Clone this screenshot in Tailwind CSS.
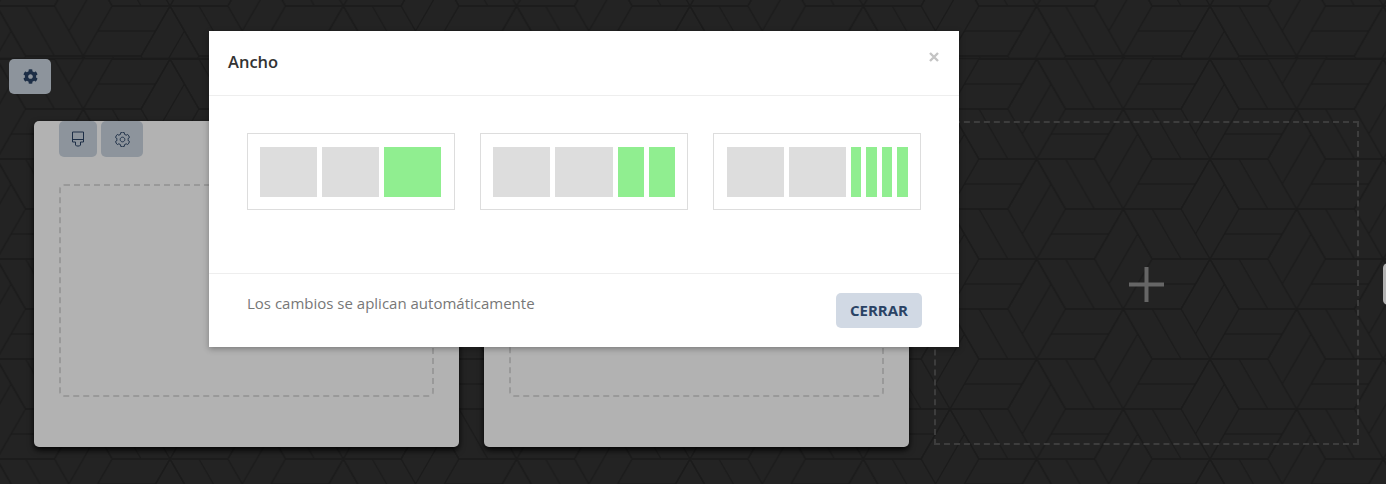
<!DOCTYPE html>
<html lang="es">
<head>
<meta charset="utf-8">
<script src="https://cdn.jsdelivr.net/npm/@tailwindcss/browser@4"></script>
<title>Ancho</title>
</head>
<body class="m-0 overflow-hidden font-['Open_Sans','Noto_Sans',sans-serif]">
<div class="relative h-[484px] w-[1386px] overflow-hidden bg-[#333333]">
  <!-- background texture -->
  <svg class="absolute inset-0 h-full w-full" xmlns="http://www.w3.org/2000/svg" aria-hidden="true">
    <defs>
      <g id="cell" fill="none" stroke="#282828" stroke-width="1.5">
        <path d="M0 0L28.87 -50L0 -100L-28.87 -50ZM14.43 -75L-14.43 -25"/>
        <path d="M0 0L-57.73 0L-86.67 -50L-28.87 -50M-57.73 -50L-28.87 0"/>
        <path d="M0 0L57.73 0L86.67 -50L28.87 -50M14.43 -25L72.2 -25"/>
      </g>
      <g id="tile">
        <use href="#cell" x="0" y="0"/><use href="#cell" x="173.33" y="0"/>
        <use href="#cell" x="0" y="100"/><use href="#cell" x="173.33" y="100"/>
        <use href="#cell" x="0" y="200"/><use href="#cell" x="173.33" y="200"/>
        <use href="#cell" x="86.67" y="50"/><use href="#cell" x="86.67" y="150"/>
        <use href="#cell" x="-86.67" y="50"/><use href="#cell" x="-86.67" y="150"/>
        <use href="#cell" x="260" y="50"/><use href="#cell" x="260" y="150"/>
      </g>
      <pattern id="main" patternUnits="userSpaceOnUse" x="83.33" y="9" width="173.33" height="100"><use href="#tile"/></pattern>
      <pattern id="top" patternUnits="userSpaceOnUse" x="83.33" y="56" width="173.33" height="100"><use href="#tile"/></pattern>
    </defs>
    <rect x="0" y="0" width="1386" height="58" fill="url(#top)"/>
    <rect x="0" y="59" width="1386" height="425" fill="url(#main)"/>
    <rect x="0" y="57.7" width="1386" height="1.6" fill="#282828"/>
  </svg>

  <!-- page content -->
  <div class="relative flex h-full flex-col">
    <div class="pl-[9px] pt-[59px]">
      <button class="flex h-[35px] w-[42px] items-center justify-center rounded-[5px] bg-[#cbd5e0]">
        <svg class="h-[15px] w-[15px]" viewBox="0 0 512 512"><path fill="#2a4365" d="M487.4 315.7l-42.6-24.6c4.3-23.2 4.3-47 0-70.2l42.6-24.6c4.9-2.8 7.1-8.6 5.5-14-11.1-35.6-30-67.8-54.7-94.6-3.8-4.1-10-5.1-14.8-2.3L380.8 110c-17.9-15.4-38.5-27.3-60.8-35.1V25.8c0-5.6-3.9-10.5-9.4-11.7-36.7-8.2-74.3-7.8-109.2 0-5.5 1.2-9.4 6.1-9.4 11.7V75c-22.2 7.9-42.8 19.8-60.8 35.1L88.7 85.5c-4.9-2.8-11-1.9-14.8 2.3-24.7 26.7-43.6 58.9-54.7 94.6-1.7 5.4.6 11.2 5.5 14L67.3 221c-4.3 23.2-4.3 47 0 70.2l-42.6 24.6c-4.9 2.8-7.1 8.6-5.5 14 11.1 35.6 30 67.8 54.7 94.6 3.8 4.1 10 5.1 14.8 2.3l42.6-24.6c17.9 15.4 38.5 27.3 60.8 35.1v49.2c0 5.6 3.9 10.5 9.4 11.7 36.7 8.2 74.3 7.8 109.2 0 5.5-1.2 9.4-6.1 9.4-11.7v-49.2c22.2-7.9 42.8-19.8 60.8-35.1l42.6 24.6c4.9 2.8 11 1.9 14.8-2.3 24.7-26.7 43.6-58.9 54.7-94.6 1.5-5.5-.7-11.3-5.6-14.1zM256 336c-44.1 0-80-35.9-80-80s35.9-80 80-80 80 35.9 80 80-35.9 80-80 80z"/></svg>
      </button>
    </div>
    <div class="mt-[27px] flex gap-[25px] pl-[34px]">
      <div class="h-[326px] w-[425px] rounded-[5px] bg-white px-[25px] shadow-[0_3px_6px_rgba(0,0,0,0.9)]">
        <div class="flex gap-[4px]">
          <button class="flex h-[36px] w-[38px] items-center justify-center rounded-[5px] bg-[#cbd5e0]">
            <svg class="h-[16px] w-[14px]" viewBox="0 0 14 16" fill="none" stroke="#2a4365" stroke-width="1"><path d="M1.5 1H12.5V11H9.5V14L8.5 15H5.5L4.5 14V11H1.5ZM1.5 8.5H12.5"/></svg>
          </button>
          <button class="flex h-[36px] w-[42px] items-center justify-center rounded-[5px] bg-[#cbd5e0]">
            <svg class="h-[15px] w-[15px]" viewBox="0 0 512 512"><path fill="none" stroke="#2a4365" stroke-width="34" d="M487.4 315.7l-42.6-24.6c4.3-23.2 4.3-47 0-70.2l42.6-24.6c4.9-2.8 7.1-8.6 5.5-14-11.1-35.6-30-67.8-54.7-94.6-3.8-4.1-10-5.1-14.8-2.3L380.8 110c-17.9-15.4-38.5-27.3-60.8-35.1V25.8c0-5.6-3.9-10.5-9.4-11.7-36.7-8.2-74.3-7.8-109.2 0-5.5 1.2-9.4 6.1-9.4 11.7V75c-22.2 7.9-42.8 19.8-60.8 35.1L88.7 85.5c-4.9-2.8-11-1.9-14.8 2.3-24.7 26.7-43.6 58.9-54.7 94.6-1.7 5.4.6 11.2 5.5 14L67.3 221c-4.3 23.2-4.3 47 0 70.2l-42.6 24.6c-4.9 2.8-7.1 8.6-5.5 14 11.1 35.6 30 67.8 54.7 94.6 3.8 4.1 10 5.1 14.8 2.3l42.6-24.6c17.9 15.4 38.5 27.3 60.8 35.1v49.2c0 5.6 3.9 10.5 9.4 11.7 36.7 8.2 74.3 7.8 109.2 0 5.5-1.2 9.4-6.1 9.4-11.7v-49.2c22.2-7.9 42.8-19.8 60.8-35.1l42.6 24.6c4.9 2.8 11 1.9 14.8-2.3 24.7-26.7 43.6-58.9 54.7-94.6 1.5-5.5-.7-11.3-5.6-14.1zM256 336c-44.1 0-80-35.9-80-80s35.9-80 80-80 80 35.9 80 80-35.9 80-80 80z"/></svg>
          </button>
        </div>
        <div class="mt-[27px] h-[213px] rounded-[5px] border-2 border-dashed border-[#dcdcdc]"></div>
      </div>
      <div class="h-[326px] w-[425px] rounded-[5px] bg-white px-[25px] pt-[63px] shadow-[0_3px_6px_rgba(0,0,0,0.9)]">
        <div class="h-[213px] rounded-[5px] border-2 border-dashed border-[#dcdcdc]"></div>
      </div>
      <div class="flex h-[324px] w-[425px] items-center justify-center border-2 border-dashed border-[#585858]">
        <svg class="mt-[2px] h-[35px] w-[35px]" viewBox="0 0 35 35"><path fill="#929292" d="M15.5 0H19.5V15.5H35V19.5H19.5V35H15.5V19.5H0V15.5H15.5Z"/></svg>
      </div>
    </div>
  </div>
  <!-- tab on right edge -->
  <div class="absolute left-[1383px] top-[263px] h-[42px] w-[10px] rounded-[5px] bg-white"></div>

  <!-- modal backdrop -->
  <div class="absolute inset-0 bg-black/30"></div>

  <!-- modal -->
  <div class="absolute left-[209px] top-[31px] flex h-[316px] w-[750px] flex-col bg-white shadow-[0_2px_6px_rgba(0,0,0,0.3)]">
    <div class="flex h-[65px] items-start justify-between border-b border-[#eeeeee] pl-[19px] pr-[20px]">
      <h2 class="mt-[19px] text-[16.5px] leading-[24px] font-semibold text-[#333333]">Ancho</h2>
      <button class="mt-[21px] h-[10px] w-[10px]" aria-label="Cerrar">
        <svg class="block h-[10px] w-[10px]" viewBox="0 0 10 10"><path d="M1 1L9 9M9 1L1 9" stroke="#c4c4c4" stroke-width="2.4" fill="none"/></svg>
      </button>
    </div>
    <div class="flex h-[177px] gap-[25px] pl-[38px] pt-[37px]">
      <div class="flex h-[77px] w-[208px] gap-[5px] border border-[#dddddd] pl-[12px] pt-[13px]">
        <div class="h-[50px] w-[57px] bg-[#dddddd]"></div>
        <div class="h-[50px] w-[57px] bg-[#dddddd]"></div>
        <div class="h-[50px] w-[57px] bg-[#90ee90]"></div>
      </div>
      <div class="flex h-[77px] w-[208px] gap-[5px] border border-[#dddddd] pl-[12px] pt-[13px]">
        <div class="h-[50px] w-[57px] bg-[#dddddd]"></div>
        <div class="h-[50px] w-[58px] bg-[#dddddd]"></div>
        <div class="h-[50px] w-[26px] bg-[#90ee90]"></div>
        <div class="h-[50px] w-[26px] bg-[#90ee90]"></div>
      </div>
      <div class="flex h-[77px] w-[208px] gap-[5px] border border-[#dddddd] pl-[13px] pt-[13px]">
        <div class="h-[50px] w-[57px] bg-[#dddddd]"></div>
        <div class="h-[50px] w-[57px] bg-[#dddddd]"></div>
        <div class="h-[50px] w-[10px] bg-[#90ee90]"></div>
        <div class="h-[50px] w-[11px] bg-[#90ee90]"></div>
        <div class="h-[50px] w-[10px] bg-[#90ee90]"></div>
        <div class="h-[50px] w-[11px] bg-[#90ee90]"></div>
      </div>
    </div>
    <div class="flex h-[74px] items-start justify-between border-t border-[#eeeeee] pl-[38px] pr-[37px]">
      <p class="mt-[18px] text-[15px] leading-[22px] text-[#777777]">Los cambios se aplican automáticamente</p>
      <button class="mt-[19px] h-[35px] w-[86px] rounded-[5px] bg-[#d1d9e4] text-[15px] font-bold text-[#2a4365]">CERRAR</button>
    </div>
  </div>
</div>
</body>
</html>
